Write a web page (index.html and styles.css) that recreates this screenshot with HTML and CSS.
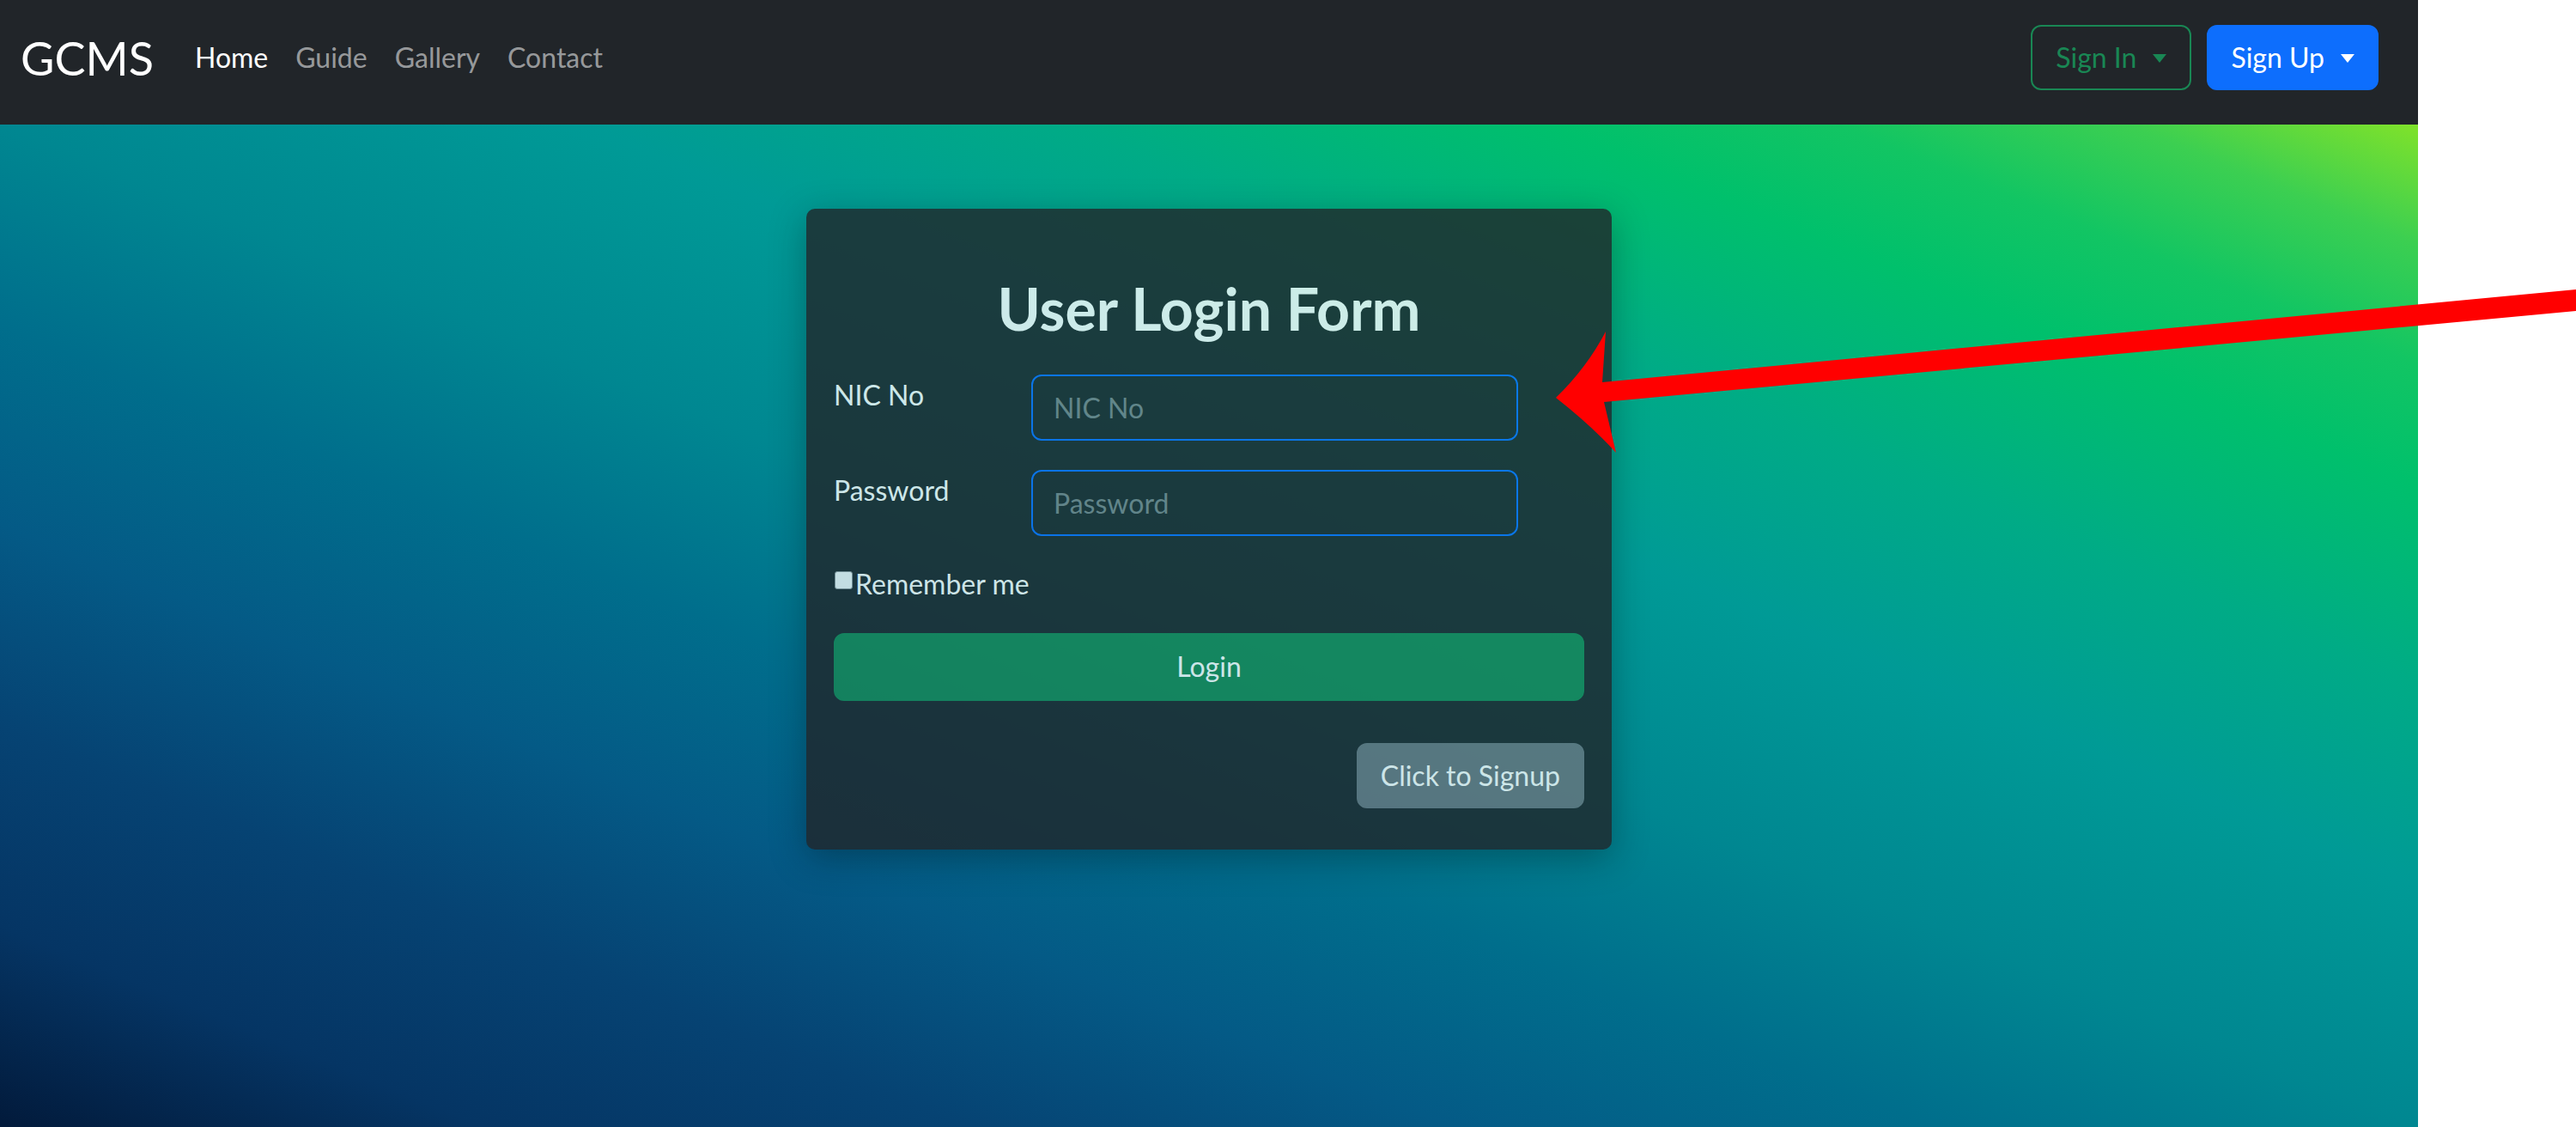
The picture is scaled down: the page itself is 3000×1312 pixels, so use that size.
FILE: index.html
```html
<!DOCTYPE html>
<html lang="en">
<head>
<meta charset="utf-8">
<title>GCMS - User Login</title>
<link rel="stylesheet" href="styles.css">
</head>
<body>
<div class="page">
  <nav class="navbar">
    <a class="brand" href="#">GCMS</a>
    <ul class="nav-links">
      <li><a class="nav-link active" href="#">Home</a></li>
      <li><a class="nav-link" href="#">Guide</a></li>
      <li><a class="nav-link" href="#">Gallery</a></li>
      <li><a class="nav-link" href="#">Contact</a></li>
    </ul>
    <div class="nav-actions">
      <button class="btn btn-outline-success dropdown-toggle" type="button">Sign In</button>
      <button class="btn btn-primary dropdown-toggle" type="button">Sign Up</button>
    </div>
  </nav>
  <main class="hero">
    <div class="card">
      <h2 class="card-title">User Login Form</h2>
      <form class="login-form">
        <div class="form-row">
          <label class="form-label" for="nic">NIC No</label>
          <input class="form-control" id="nic" type="text" placeholder="NIC No">
        </div>
        <div class="form-row form-row-last">
          <label class="form-label" for="pwd">Password</label>
          <input class="form-control" id="pwd" type="password" placeholder="Password">
        </div>
        <label class="check"><input class="check-input" type="checkbox">Remember me</label>
        <button class="btn btn-success btn-block" type="button">Login</button>
        <div class="signup-row">
          <button class="btn btn-secondary" type="button">Click to Signup</button>
        </div>
      </form>
    </div>
  </main>
</div>
<svg class="annotation" width="3000" height="1312" viewBox="0 0 3000 1312" aria-hidden="true">
  <path d="M1812 463 Q1848 428 1870 386 L1866 445 L3000 337 L3000 362 L1868 468 L1882 527 Q1854 496 1812 463 Z" fill="#ff0000"/>
</svg>
</body>
</html>
```

FILE: styles.css
```css
* {
  box-sizing: border-box;
}

html, body {
  margin: 0;
  padding: 0;
}

body {
  width: 3000px;
  height: 1312px;
  overflow: hidden;
  background: #ffffff;
  font-family: Lato, "Open Sans", "Noto Sans", sans-serif;
  position: relative;
}

.page {
  width: 2816px;
  height: 1312px;
  display: flex;
  flex-direction: column;
}

/* ---------- Navbar ---------- */
.navbar {
  height: 145px;
  flex: 0 0 145px;
  background: #212529;
  display: flex;
  align-items: center;
  padding: 0 46px 11px 24px;
}

.brand {
  font-size: 54px;
  line-height: 1.5;
  color: #ffffff;
  text-decoration: none;
  margin-right: 32px;
}

.nav-links {
  list-style: none;
  margin: 0;
  padding: 0;
  display: flex;
}

.nav-link {
  display: block;
  padding: 0 16px;
  font-size: 32px;
  line-height: 48px;
  color: rgba(255, 255, 255, 0.55);
  text-decoration: none;
}

.nav-link.active {
  color: #ffffff;
}

.nav-actions {
  margin-left: auto;
  display: flex;
  gap: 18px;
}

/* ---------- Buttons ---------- */
.btn {
  font-family: inherit;
  font-size: 32px;
  line-height: 48px;
  padding: 12px 24px;
  border: 2px solid transparent;
  border-radius: 12px;
  cursor: pointer;
  background: transparent;
  color: #ffffff;
  text-align: center;
}

.btn-outline-success {
  color: #198754;
  border-color: #198754;
  padding: 12px 27px;
}

.btn-primary {
  background: #0d6efd;
  border-color: #0d6efd;
  color: #ffffff;
  padding: 12px 26px;
}

.dropdown-toggle::after {
  content: "";
  display: inline-block;
  margin-left: 19px;
  vertical-align: 6px;
  border-top: 10px solid currentColor;
  border-left: 8px solid transparent;
  border-right: 8px solid transparent;
}

.btn-success {
  background: #198754;
  border-color: #198754;
  color: #ffffff;
}

.btn-secondary {
  background: #6c757d;
  border-color: #6c757d;
  color: #ffffff;
  height: 76px;
  padding: 12px 26px;
}

.btn-block {
  display: block;
  width: 100%;
  height: 79px;
  margin: 0 0 49px;
}

/* ---------- Hero ---------- */
.hero {
  flex: 1 1 auto;
  display: flex;
  justify-content: center;
  align-items: flex-start;
  padding-top: 98px;
  background: linear-gradient(to top right,
    #021a3b 0%,
    #053564 10%,
    #064373 20%,
    #045a86 30%,
    #006e8c 40%,
    #008791 50%,
    #009a96 62%,
    #00ab86 72%,
    #00c06c 82%,
    #12c563 88%,
    #3ccf51 94%,
    #80e22a 100%);
}

.card {
  width: 938px;
  background: #212529;
  opacity: 0.8;
  border-radius: 10px;
  padding: 32px 32px 32px;
  box-shadow: 0 10px 40px rgba(0, 0, 0, 0.35);
  color: #ffffff;
}

.card-title {
  margin: 43px 0 36px;
  font-size: 68px;
  line-height: 1.2;
  font-weight: 700;
  text-align: center;
  color: #ffffff;
}

.login-form {
  display: flex;
  flex-direction: column;
  margin-bottom: 16px;
}

.form-row {
  display: grid;
  grid-template-columns: 182px 567px;
  column-gap: 48px;
  align-items: start;
  margin-bottom: 34px;
}

.form-row-last {
  margin-bottom: 32px;
}

.form-label {
  font-size: 32px;
  line-height: 48px;
  color: #ffffff;
}

.form-control {
  display: block;
  width: 567px;
  height: 77px;
  padding: 12px 24px;
  font-family: inherit;
  font-size: 32px;
  line-height: 48px;
  color: #ffffff;
  background: #212529;
  border: 2px solid #0d6efd;
  border-radius: 12px;
  outline: none;
}

.form-control::placeholder {
  color: #7a8388;
}

.check {
  display: flex;
  align-items: center;
  font-size: 32px;
  line-height: 48px;
  color: #ffffff;
  margin-bottom: 33px;
}

.check-input {
  appearance: none;
  -webkit-appearance: none;
  width: 21px;
  height: 21px;
  margin: 0 3px 0 1px;
  position: relative;
  top: -4px;
  background: #f4f7f8;
  border: 1px solid #8d9296;
  border-radius: 3px;
}

.signup-row {
  display: flex;
  justify-content: flex-end;
}

/* ---------- Annotation overlay ---------- */
.annotation {
  position: absolute;
  left: 0;
  top: 0;
  pointer-events: none;
}
```
